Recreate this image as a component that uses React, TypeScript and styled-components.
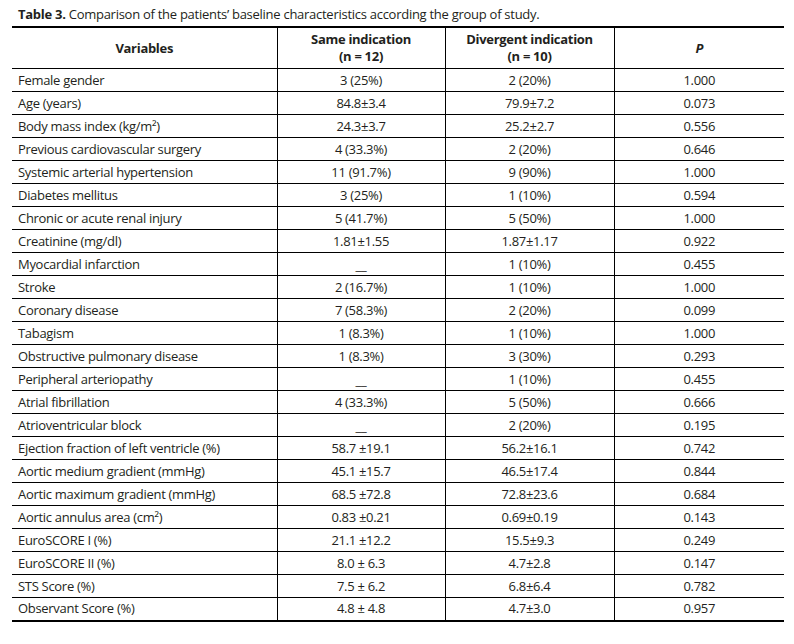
import React from "react";
import styled, { createGlobalStyle } from "styled-components";

const Global = createGlobalStyle`
  html, body { margin: 0; padding: 0; background: #fff; }
  body { font-family: "Open Sans", "Noto Sans", sans-serif; color: #231f20; }
`;

const Page = styled.div`
  width: 794px;
  height: 644px;
  box-sizing: border-box;
  padding: 6px 10px 0 12px;
  background: #fff;
`;

const Caption = styled.div`
  font-size: 13px;
  line-height: 17px;
  padding-left: 6px;
  margin-bottom: 3px;
  letter-spacing: -0.27px;
  white-space: nowrap;
`;

const CaptionLabel = styled.span`
  font-weight: 700;
`;

const Table = styled.table`
  width: 772px;
  border-collapse: collapse;
  table-layout: fixed;
  font-size: 13px;
  letter-spacing: -0.3px;
  border-top: 2.5px solid #000;
  border-bottom: 2.5px solid #000;
`;

const HeadCell = styled.th<{ $italic?: boolean }>`
  height: 40px;
  padding: 0;
  font-weight: 700;
  font-style: ${(p) => (p.$italic ? "italic" : "normal")};
  line-height: 17px;
  text-align: center;
  vertical-align: middle;
  border-bottom: 1.5px solid #000;
  & + & { border-left: 1.5px solid #000; }
`;

const Row = styled.tr`
  height: 23px;
  & + & td { border-top: 1.5px solid #000; }
`;

const Cell = styled.td<{ $left?: boolean }>`
  padding: 0 0 0 ${(p) => (p.$left ? "6px" : "0")};
  text-align: ${(p) => (p.$left ? "left" : "center")};
  vertical-align: middle;
  white-space: nowrap;
  line-height: 17px;
  & + & { border-left: 1.5px solid #000; }
`;

const Dash = styled.span`
  display: inline-block;
  position: relative;
  top: 1px;
`;

type R = [string, string, string, string];

const rows: R[] = [
  ["Female gender", "3 (25%)", "2 (20%)", "1.000"],
  ["Age (years)", "84.8±3.4", "79.9±7.2", "0.073"],
  ["Body mass index (kg/m²)", "24.3±3.7", "25.2±2.7", "0.556"],
  ["Previous cardiovascular surgery", "4 (33.3%)", "2 (20%)", "0.646"],
  ["Systemic arterial hypertension", "11 (91.7%)", "9 (90%)", "1.000"],
  ["Diabetes mellitus", "3 (25%)", "1 (10%)", "0.594"],
  ["Chronic or acute renal injury", "5 (41.7%)", "5 (50%)", "1.000"],
  ["Creatinine (mg/dl)", "1.81±1.55", "1.87±1.17", "0.922"],
  ["Myocardial infarction", "__", "1 (10%)", "0.455"],
  ["Stroke", "2 (16.7%)", "1 (10%)", "1.000"],
  ["Coronary disease", "7 (58.3%)", "2 (20%)", "0.099"],
  ["Tabagism", "1 (8.3%)", "1 (10%)", "1.000"],
  ["Obstructive pulmonary disease", "1 (8.3%)", "3 (30%)", "0.293"],
  ["Peripheral arteriopathy", "__", "1 (10%)", "0.455"],
  ["Atrial fibrillation", "4 (33.3%)", "5 (50%)", "0.666"],
  ["Atrioventricular block", "__", "2 (20%)", "0.195"],
  ["Ejection fraction of left ventricle (%)", "58.7 ±19.1", "56.2±16.1", "0.742"],
  ["Aortic medium gradient (mmHg)", "45.1 ±15.7", "46.5±17.4", "0.844"],
  ["Aortic maximum gradient (mmHg)", "68.5 ±72.8", "72.8±23.6", "0.684"],
  ["Aortic annulus area (cm²)", "0.83 ±0.21", "0.69±0.19", "0.143"],
  ["EuroSCORE I (%)", "21.1 ±12.2", "15.5±9.3", "0.249"],
  ["EuroSCORE II (%)", "8.0 ± 6.3", "4.7±2.8", "0.147"],
  ["STS Score (%)", "7.5 ± 6.2", "6.8±6.4", "0.782"],
  ["Observant Score (%)", "4.8 ± 4.8", "4.7±3.0", "0.957"],
];

export default function App() {
  return (
    <Page>
      <Global />
      <Caption>
        <CaptionLabel>Table 3.</CaptionLabel> Comparison of the patients’ baseline characteristics according the group of study.
      </Caption>
      <Table>
        <colgroup>
          <col style={{ width: 265 }} />
          <col style={{ width: 168 }} />
          <col style={{ width: 169 }} />
          <col style={{ width: 170 }} />
        </colgroup>
        <thead>
          <tr>
            <HeadCell>Variables</HeadCell>
            <HeadCell>
              Same indication
              <br />
              (n = 12)
            </HeadCell>
            <HeadCell>
              Divergent indication
              <br />
              (n = 10)
            </HeadCell>
            <HeadCell $italic>P</HeadCell>
          </tr>
        </thead>
        <tbody>
          {rows.map((r) => (
            <Row key={r[0]}>
              <Cell $left>{r[0]}</Cell>
              <Cell>{r[1] === "__" ? <Dash>__</Dash> : r[1]}</Cell>
              <Cell>{r[2]}</Cell>
              <Cell>{r[3]}</Cell>
            </Row>
          ))}
        </tbody>
      </Table>
    </Page>
  );
}
